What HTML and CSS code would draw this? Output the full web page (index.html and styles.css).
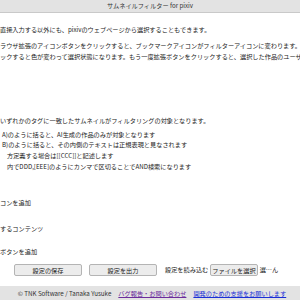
FILE: index.html
```html
<!DOCTYPE html>
<html lang="ja">
<head>
    <meta charset="UTF-8">
    <meta name="viewport" content="width=device-width, initial-scale=1.0">
    <title>サムネイルフィルター for pixiv</title>
    <link rel="stylesheet" href="styles.css">
</head>
<body>
    <div class="header">サムネイルフィルター for pixiv</div>

    <div class="main">
        <p class="intro">直接入力する以外にも、pixivのウェブページから選択することもできます。</p>
        <p class="howto">ラウザ拡張のアイコンボタンをクリックすると、ブックマークアイコンがフィルターアイコンに変わります。<br>ックすると色が変わって選択状態になります。もう一度拡張ボタンをクリックすると、選択した作品のユーザ</p>

        <p class="tags">いずれかのタグに一致したサムネイルがフィルタリングの対象となります。</p>
        <ul class="rules">
            <li>A)のように括ると、AI生成の作品のみが対象となります</li>
            <li>B)のように括ると、その内側のテキストは正規表現と見なされます</li>
            <li class="indent">方定義する場合は[[CCC]]と記述します</li>
            <li class="indent">内でDDD,[EEE]のようにカンマで区切ることでAND検索になります</li>
        </ul>

        <p class="option opt-icon">コンを追加</p>
        <p class="option opt-content">するコンテンツ</p>
        <p class="option opt-button">ボタンを追加</p>

        <div class="actions">
            <button class="btn wide">設定の保存</button>
            <button class="btn wide">設定を出力</button>
            <span class="load-label">設定を読み込む</span>
            <button class="btn file">ファイルを選択</button>
            <span class="file-name">選…ん</span>
        </div>
    </div>

    <div class="footer">
        <span>© TNK Software / Tanaka Yusuke</span>
        <a class="visited" href="#">バグ報告・お問い合わせ</a>
        <a href="#">開発のための支援をお願いします</a>
    </div>
</body>
</html>
```

FILE: styles.css
```css
body {
    margin: 0;
    width: 300px;
    height: 300px;
    overflow: hidden;
    font-family: "Noto Sans CJK JP", sans-serif;
    font-size: 6.2px;
    line-height: 11px;
    color: #222;
    background: #fff;
    display: flex;
    flex-direction: column;
}
.header {
    height: 12px;
    line-height: 12px;
    text-align: center;
    background-color: #e3e3e3;
    border-bottom: 1px solid #c9c9c9;
    color: #333;
}
.main {
    flex: 1;
    white-space: nowrap;
    overflow: hidden;
}
p, ul {
    margin: 0;
    padding: 0;
}
ul {
    list-style: none;
}
.intro {
    margin-top: 10.5px;
}
.howto {
    margin-top: 5px;
}
.tags {
    margin-top: 53px;
}
.rules {
    margin-top: 4px;
    padding-left: 2px;
    line-height: 10.7px;
}
.rules .indent {
    padding-left: 5px;
}
.opt-icon {
    margin-top: 25px;
}
.opt-content {
    margin-top: 15px;
}
.opt-button {
    margin-top: 12px;
}
.actions {
    display: flex;
    align-items: center;
    margin-top: 6.5px;
    padding-left: 14px;
    line-height: 12px;
}
.btn {
    font-family: inherit;
    font-size: 6.2px;
    height: 12.5px;
    padding: 0;
    margin: 0;
    background-color: #ececec;
    border: 1px solid #b4b4b4;
    border-radius: 2px;
    color: #222;
}
.btn.wide {
    width: 68px;
    margin-right: 7px;
}
.btn.file {
    padding: 0 1px;
    margin: 0 2px;
    white-space: nowrap;
}
.load-label {
    margin-left: 1px;
}
.footer {
    height: 14px;
    display: flex;
    justify-content: center;
    align-items: center;
    gap: 7px;
    padding-left: 4px;
    background-color: #e3e3e3;
    color: #333;
}
.footer a {
    color: #1a2fd6;
}
.footer a.visited {
    color: #6b2c9c;
}
```
